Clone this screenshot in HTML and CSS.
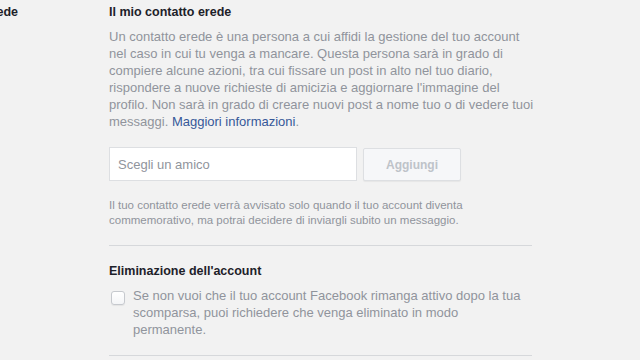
FILE: index.html
```html
<!DOCTYPE html>
<html lang="it">
<head>
    <meta charset="UTF-8">
    <meta name="viewport" content="width=device-width, initial-scale=1.0">
    <title>Impostazioni - Contatto erede</title>
    <link rel="stylesheet" href="styles.css">
</head>
<body>
    <div class="settings-row">
        <div class="row-label">Contatto erede</div>
        <div class="row-content">
            <h3>Il mio contatto erede</h3>
            <p class="intro">Un contatto erede è una persona a cui affidi la gestione del tuo account nel caso in cui tu venga a mancare. Questa persona sarà in grado di compiere alcune azioni, tra cui fissare un post in alto nel tuo diario, rispondere a nuove richieste di amicizia e aggiornare l'immagine del profilo. Non sarà in grado di creare nuovi post a nome tuo o di vedere tuoi messaggi. <a href="#">Maggiori informazioni</a>.</p>

            <div class="friend-picker">
                <input type="text" class="friend-input" placeholder="Scegli un amico">
                <button class="add-button" disabled>Aggiungi</button>
            </div>

            <p class="note">Il tuo contatto erede verrà avvisato solo quando il tuo account diventa commemorativo, ma potrai decidere di inviargli subito un messaggio.</p>

            <hr class="divider">

            <h3>Eliminazione dell'account</h3>
            <label class="check-row">
                <span class="check-box"></span>
                <span class="check-text">Se non vuoi che il tuo account Facebook rimanga attivo dopo la tua scomparsa, puoi richiedere che venga eliminato in modo permanente.</span>
            </label>

            <hr class="divider">
        </div>
    </div>
</body>
</html>
```

FILE: styles.css
```css
body {
    font-family: 'Liberation Sans', Arial, sans-serif;
    margin: 0;
    padding: 0;
    background-color: #f2f2f2;
    color: #90949c;
    overflow: hidden;
}
.settings-row {
    display: grid;
    grid-template-columns: 120px 423px;
    column-gap: 91px;
    margin-left: -102px;
    padding-top: 4px;
}
.row-label {
    font-size: 12.5px;
    line-height: 16px;
    font-weight: bold;
    color: #1d2129;
    text-align: right;
    white-space: nowrap;
}
.row-content h3 {
    font-size: 12.5px;
    line-height: 16px;
    font-weight: bold;
    color: #1d2129;
    margin: 0;
}
.intro {
    font-size: 13px;
    line-height: 17px;
    margin: 8px 0 0;
    width: 426px;
}
.intro a {
    color: #365899;
    text-decoration: none;
}
.friend-picker {
    display: flex;
    gap: 6px;
    margin-top: 17px;
}
.friend-input {
    width: 248px;
    height: 34px;
    box-sizing: border-box;
    border: 1px solid #dddfe2;
    background: white;
    padding: 0 8px;
    font-family: inherit;
    font-size: 13px;
    color: #1d2129;
    outline: none;
}
.friend-input::placeholder {
    color: #90949c;
}
.add-button {
    width: 98px;
    height: 33px;
    margin-top: 1px;
    box-sizing: border-box;
    border: 1px solid #dddfe2;
    border-radius: 2px;
    background: #f6f7f9;
    font-family: inherit;
    font-size: 12px;
    font-weight: bold;
    color: #bec3c9;
    box-shadow: 0 1px 1px rgba(0, 0, 0, 0.05);
}
.note {
    font-size: 11.5px;
    line-height: 15px;
    margin: 17px 0 0;
}
.divider {
    border: none;
    border-top: 1px solid #d6d8db;
    margin: 17px 0 0;
    height: 0;
}
.divider + h3 {
    margin-top: 17px;
}
.check-row {
    display: flex;
    gap: 8px;
    margin-top: 8px;
    padding-left: 2px;
}
.check-box {
    flex: none;
    width: 14px;
    height: 14px;
    margin-top: 4px;
    box-sizing: border-box;
    border: 1px solid #c6c9ce;
    border-radius: 3px;
    background: linear-gradient(to bottom, #ffffff, #f4f5f7);
    box-shadow: 0 1px 1px rgba(0, 0, 0, 0.06);
}
.check-text {
    font-size: 13px;
    line-height: 17px;
    width: 399px;
}
```
